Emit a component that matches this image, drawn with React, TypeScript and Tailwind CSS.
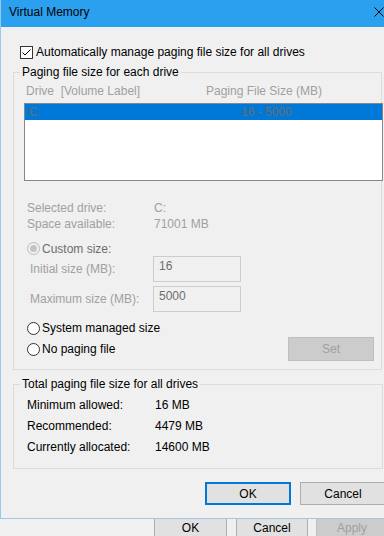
import React from "react";

const Radio = ({
  label,
  checked = false,
  disabled = false,
}: {
  label: string;
  checked?: boolean;
  disabled?: boolean;
}) => (
  <div className="flex items-center gap-x-[2px]">
    <div
      className={`w-[13px] h-[13px] rounded-full border flex items-center justify-center ${
        disabled ? "border-[#bcbcbc] bg-[#f0f0f0]" : "border-[#333333] bg-white"
      }`}
    >
      {checked && (
        <div
          className={`w-[7px] h-[7px] rounded-full ${
            disabled ? "bg-[#c4c4c4]" : "bg-[#333333]"
          }`}
        />
      )}
    </div>
    <span className={disabled ? "text-[#6d6d6d]" : "text-black"}>{label}</span>
  </div>
);

const SizeField = ({ label, value }: { label: string; value: string }) => (
  <div className="flex items-center h-[26px]">
    <span className="ml-[16px] w-[123px] text-[#a0a0a0]">{label}</span>
    <div className="w-[88px] h-[26px] border border-[#cccccc] bg-[#f0f0f0] pl-[5px] pt-[1px] text-[#6d6d6d]">
      {value}
    </div>
  </div>
);

const InfoRow = ({ label, value }: { label: string; value: string }) => (
  <div className="flex h-[16px]">
    <span className="ml-[13px] w-[127px]">{label}</span>
    <span>{value}</span>
  </div>
);

const TotalRow = ({ label, value }: { label: string; value: string }) => (
  <div className="flex leading-[21px]">
    <span className="ml-[13px] w-[128px]">{label}</span>
    <span>{value}</span>
  </div>
);

export default function App() {
  return (
    <div className="w-[384px] h-[536px] overflow-hidden bg-[#f0f0f0] text-[12px] leading-[16px] text-black font-['Segoe_UI','Liberation_Sans',sans-serif] flex flex-col">
      <div className="h-[519px] shrink-0 border-l border-b border-[#99c9ef] flex flex-col overflow-hidden">
        {/* title bar */}
        <div className="h-[27px] shrink-0 bg-[#2aa0ef] flex items-start justify-between pl-[8px]">
          <span className="mt-[4px]">Virtual Memory</span>
          <svg className="mt-[7px] shrink-0" width="10" height="10" viewBox="0 0 10 10">
            <path d="M0.5 0.5 L9.5 9.5 M9.5 0.5 L0.5 9.5" stroke="#000" strokeWidth="1" />
          </svg>
        </div>

        <div className="mt-[17px] h-[16px] flex items-center pl-[19px] gap-x-[3px]">
          <div className="w-[13px] h-[13px] border border-[#333333] bg-white flex items-center justify-center">
            <svg width="11" height="11" viewBox="0 0 11 11">
              <path d="M1.5 5.5 L4 8 L9.5 2.5" fill="none" stroke="#000" strokeWidth="1" />
            </svg>
          </div>
          <span>Automatically manage paging file size for all drives</span>
        </div>

        <fieldset className="mt-[4px] ml-[12px] w-[369px] min-w-0 shrink-0 border border-[#dcdcdc] pb-[8px]">
          <legend className="ml-[6px] px-[2px]">Paging file size for each drive</legend>
          <div className="mt-[4px] h-[14px] flex items-center text-[#a0a0a0] whitespace-pre">
            <span className="ml-[12px] w-[180px]">Drive  [Volume Label]</span>
            <span>Paging File Size (MB)</span>
          </div>
          <div className="mt-[5px] ml-[10px] w-[359px] h-[78px] border border-[#828790] bg-white">
            <div className="h-[16px] bg-[#0078d7] text-[#6d6d6d] flex">
              <span className="pl-[4px] w-[216px]">C:</span>
              <span>16 - 5000</span>
            </div>
          </div>
          <div className="mt-[19px] text-[#a0a0a0]">
            <InfoRow label="Selected drive:" value="C:" />
            <InfoRow label="Space available:" value="71001 MB" />
          </div>
          <div className="mt-[9px] h-[15px] flex items-center ml-[13px]">
            <Radio label="Custom size:" checked disabled />
          </div>
          <SizeField label="Initial size (MB):" value="16" />
          <div className="mt-[4px]">
            <SizeField label="Maximum size (MB):" value="5000" />
          </div>
          <div className="mt-[8px] h-[16px] flex items-center ml-[13px]">
            <Radio label="System managed size" />
          </div>
          <div className="mt-[1px] h-[24px] flex items-center justify-between">
            <div className="ml-[13px]">
              <Radio label="No paging file" />
            </div>
            <div className="mr-[7px] w-[86px] h-[24px] border border-[#bfbfbf] bg-[#cccccc] text-[#a0a0a0] flex items-center justify-center">
              Set
            </div>
          </div>
        </fieldset>

        <fieldset className="mt-[6px] ml-[12px] w-[370px] min-w-0 shrink-0 border border-[#dcdcdc] pb-[10px]">
          <legend className="ml-[6px] px-[2px]">Total paging file size for all drives</legend>
          <div className="mt-[3px]">
            <TotalRow label="Minimum allowed:" value="16 MB" />
            <TotalRow label="Recommended:" value="4479 MB" />
            <TotalRow label="Currently allocated:" value="14600 MB" />
          </div>
        </fieldset>

        <div className="mt-[13px] flex">
          <div className="ml-[204px] w-[86px] h-[23px] shrink-0 border-2 border-[#0078d7] bg-[#e1e1e1] flex items-center justify-center">
            OK
          </div>
          <div className="ml-[9px] w-[86px] h-[23px] shrink-0 border border-[#adadad] bg-[#e1e1e1] flex items-center justify-center">
            Cancel
          </div>
        </div>
      </div>

      {/* parent dialog buttons peeking below */}
      <div className="h-[17px] flex">
        <div className="ml-[154px] w-[73px] shrink-0 border-x border-[#adadad] bg-[#e1e1e1] flex items-center justify-center">
          OK
        </div>
        <div className="ml-[9px] w-[72px] shrink-0 border-x border-[#adadad] bg-[#e1e1e1] flex items-center justify-center">
          Cancel
        </div>
        <div className="ml-[8px] w-[72px] shrink-0 border-x border-[#bfbfbf] bg-[#cccccc] text-[#a0a0a0] flex items-center justify-center">
          Apply
        </div>
      </div>
    </div>
  );
}
